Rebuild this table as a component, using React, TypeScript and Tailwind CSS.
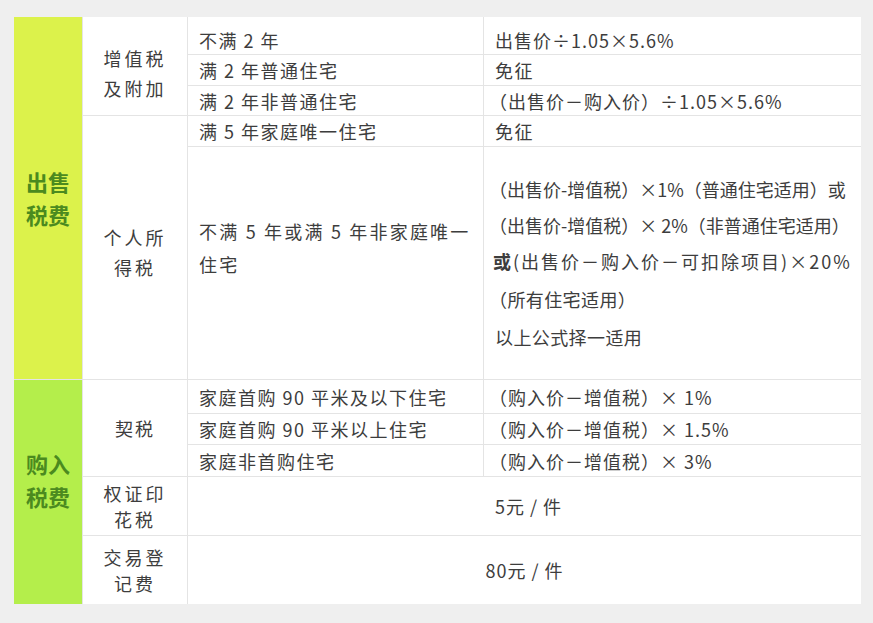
import React from 'react';

const cell = 'bg-white text-[#3d3d3d] flex items-center';

const App: React.FC = () => {
  return (
    <div
      className="w-full h-[623px] bg-[#efefef] pt-[17px] pl-[14px]"
      style={{ fontFamily: '"Noto Sans CJK SC", "Noto Sans", sans-serif' }}
    >
      <div className="grid grid-cols-[68px_104px_295px_377px] grid-rows-[37px_30px_29px_30px_232px_33px_30px_31px_58px_68px] gap-px bg-[#e4e4e4] w-[847px] text-[18px] tracking-[1.5px] leading-[24px]">
        {/* 出售税费 */}
        <div className="row-span-5 bg-[#dcf24b] flex items-center justify-center text-[22px] leading-[33px] font-bold text-[#4b8a1f] tracking-[0px] text-center">
          出售<br />税费
        </div>
        <div className={`${cell} row-span-3 justify-center text-center pt-[14px] leading-[30px] tracking-[3px]`}>
          增值税<br />及附加
        </div>
        <div className={`${cell} pl-[11px] pt-2`}>不满 2 年</div>
        <div className={`${cell} pl-[11px] pt-2 tracking-[1px]`}>出售价÷1.05×5.6%</div>
        <div className={`${cell} pl-[11px]`}>满 2 年普通住宅</div>
        <div className={`${cell} pl-[11px]`}>免征</div>
        <div className={`${cell} pl-[11px]`}>满 2 年非普通住宅</div>
        <div className={`${cell} pl-[5px] tracking-[1px]`}>（出售价－购入价）÷1.05×5.6%</div>

        <div className={`${cell} row-span-2 justify-center text-center leading-[30px] tracking-[3px] pt-2`}>
          个人所<br />得税
        </div>
        <div className={`${cell} pl-[11px]`}>满 5 年家庭唯一住宅</div>
        <div className={`${cell} pl-[11px]`}>免征</div>
        <div className={`${cell} pl-[11px] pb-[30px] leading-[33px] tracking-[2.2px]`}>
          <div>
            不满 5 年或满 5 年非家庭唯一<br />住宅
          </div>
        </div>
        <div className={`${cell} pl-[5px] leading-[36px] tracking-[0.4px]`}>
          <div>
            <div className="tracking-[0px]">（出售价-增值税）×1%（普通住宅适用）或</div>
            <div className="tracking-[0px]">（出售价-增值税）× 2%（非普通住宅适用）</div>
            <div className="pl-[4px] tracking-[2px]"><span className="font-bold">或</span>(出售价－购入价－可扣除项目)×20%</div>
            <div className="pt-[2px]">（所有住宅适用）</div>
            <div className="pl-[6px] pt-[2px]">以上公式择一适用</div>
          </div>
        </div>

        {/* 购入税费 */}
        <div className="row-span-5 bg-[#b4ee4b] flex items-center justify-center text-[22px] leading-[33px] font-bold text-[#4b8a1f] tracking-[0px] text-center pb-6">
          购入<br />税费
        </div>
        <div className={`${cell} row-span-3 justify-center tracking-[2px]`}>契税</div>
        <div className={`${cell} pl-[11px]`}>家庭首购 90 平米及以下住宅</div>
        <div className={`${cell} pl-[5px] tracking-[1px]`}>（购入价－增值税）× 1%</div>
        <div className={`${cell} pl-[11px]`}>家庭首购 90 平米以上住宅</div>
        <div className={`${cell} pl-[5px] tracking-[1px]`}>（购入价－增值税）× 1.5%</div>
        <div className={`${cell} pl-[11px]`}>家庭非首购住宅</div>
        <div className={`${cell} pl-[5px] tracking-[1px]`}>（购入价－增值税）× 3%</div>

        <div className={`${cell} justify-center text-center leading-[26px] tracking-[3px]`}>
          权证印<br />花税
        </div>
        <div className={`${cell} col-span-2 justify-center tracking-[1px] pl-2`}>5元 / 件</div>
        <div className={`${cell} justify-center text-center leading-[26px] tracking-[3px]`}>
          交易登<br />记费
        </div>
        <div className={`${cell} col-span-2 justify-center tracking-[1px]`}>80元 / 件</div>
      </div>
    </div>
  );
};

export default App;
